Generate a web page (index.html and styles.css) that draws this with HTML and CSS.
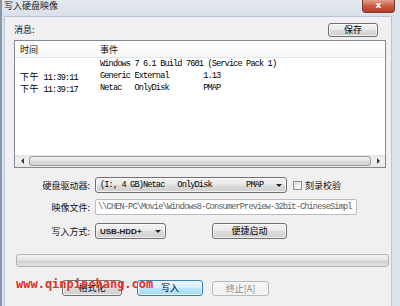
FILE: index.html
```html
<!DOCTYPE html>
<html>
<head>
    <meta charset="UTF-8">
    <title>写入硬盘映像</title>
    <link rel="stylesheet" href="styles.css">
</head>
<body>
    <div class="titlebar">
        <span class="title">写入硬盘映像</span>
        <div class="close-btn">x</div>
    </div>

    <div class="client">
        <div class="msg-head">
            <span class="label">消息:</span>
            <button class="btn save-btn">保存</button>
        </div>

        <div class="listbox">
            <div class="list-head">
                <span class="col-time">时间</span>
                <span class="col-event">事件</span>
            </div>
            <div class="list-rows">
                <div class="row">
                    <span class="col-time mono"></span>
                    <span class="col-event mono">Windows 7 6.1 Build 7601 (Service Pack 1)</span>
                </div>
                <div class="row">
                    <span class="col-time mono"><span class="cj">下午</span> 11:39:11</span>
                    <span class="col-event mono">Generic External        1.13</span>
                </div>
                <div class="row">
                    <span class="col-time mono"><span class="cj">下午</span> 11:39:17</span>
                    <span class="col-event mono">Netac   OnlyDisk        PMAP</span>
                </div>
            </div>
            <div class="hscroll">
                <div class="arrow arrow-left"></div>
                <div class="thumb"></div>
                <div class="arrow arrow-right"></div>
            </div>
        </div>

        <div class="form-row drive-row">
            <span class="form-label">硬盘驱动器:</span>
            <div class="combo drive-combo">
                <span class="mono">(I:, 4 GB)Netac   OnlyDisk        PMAP</span>
                <span class="caret"></span>
            </div>
            <span class="checkbox"></span>
            <span class="check-label">刻录校验</span>
        </div>

        <div class="form-row file-row">
            <span class="form-label">映像文件:</span>
            <div class="textbox mono">\\CHEN-PC\Movie\Windows8-ConsumerPreview-32bit-ChineseSimpl</div>
        </div>

        <div class="form-row mode-row">
            <span class="form-label">写入方式:</span>
            <div class="combo mode-combo">
                <span class="mode-text">USB-HDD+</span>
                <span class="caret"></span>
            </div>
            <button class="btn boot-btn">便捷启动</button>
        </div>

        <div class="progress"></div>

        <div class="actions">
            <button class="btn format-btn">格式化</button>
            <button class="btn default-btn write-btn">写入</button>
            <button class="btn disabled-btn stop-btn">终止[A]</button>
        </div>

        <div class="watermark">www.qinpinchang.com</div>
    </div>
</body>
</html>
```

FILE: styles.css
```css
body {
    margin: 0;
    width: 400px;
    height: 306px;
    overflow: hidden;
    background: #dbe3ec;
    border-left: 2px solid #8796a9;
    box-sizing: border-box;
    font-family: "Noto Sans CJK SC", sans-serif;
    font-size: 9px;
    color: #111;
}

.titlebar {
    height: 16px;
    display: flex;
    align-items: flex-start;
    justify-content: space-between;
    background: linear-gradient(#e4e8ee, #d9e1ea);
}

.title {
    margin-left: 2px;
    line-height: 12px;
    font-size: 9px;
    color: #222;
}

.close-btn {
    width: 31px;
    height: 12px;
    margin-right: 5px;
    border: 1px solid #7a3b33;
    border-top: none;
    border-radius: 0 0 4px 4px;
    background: linear-gradient(#e4a08f, #cc5a43 50%, #b83a22);
    color: #fff;
    font-family: "DejaVu Sans", sans-serif;
    font-weight: bold;
    font-size: 9px;
    line-height: 11px;
    text-align: center;
}

.client {
    position: relative;
    margin: 0 8px 0 2px;
    height: 290px;
    box-sizing: border-box;
    padding: 6px 5px 0 9px;
    background: #f0f0f0;
    border: 1px solid #b9c5d3;
    border-bottom: none;
}

.mono {
    font-family: "Liberation Mono", "Noto Sans CJK SC", monospace;
    font-size: 8.6px;
    letter-spacing: -0.86px;
    white-space: pre;
    color: #000;
}

.cj {
    font-family: "Noto Sans CJK SC", sans-serif;
    font-size: 9px;
    letter-spacing: 0.6px;
}

/* message header */
.msg-head {
    height: 14px;
    display: flex;
    align-items: center;
    justify-content: space-between;
}

.label {
    line-height: 12px;
}

.btn {
    box-sizing: border-box;
    padding: 0;
    border: 1px solid #707070;
    border-radius: 3px;
    background: linear-gradient(#f2f2f2, #ebebeb 45%, #dddddd 50%, #cfcfcf);
    box-shadow: inset 0 0 0 1px rgba(255, 255, 255, 0.7);
    font-family: "Noto Sans CJK SC", sans-serif;
    font-size: 9px;
    line-height: 12px;
    color: #000;
}

.save-btn {
    width: 50px;
    height: 14px;
    margin-right: 8px;
}

/* list view */
.listbox {
    margin-top: 3px;
    height: 128px;
    box-sizing: border-box;
    border: 1px solid #828790;
    background: #fff;
    display: flex;
    flex-direction: column;
}

.list-head {
    height: 16px;
    flex-shrink: 0;
    display: flex;
    align-items: center;
    border-bottom: 1px solid #e3e6ea;
    background: linear-gradient(#fff, #f7f8f9);
}

.col-time {
    width: 80px;
    padding-left: 5px;
    flex-shrink: 0;
}

.col-event {
    flex: 1;
}

.list-rows {
    flex: 1;
}

.row {
    height: 12px;
    display: flex;
    align-items: center;
    color: #1a1a1a;
}

.hscroll {
    height: 12px;
    flex-shrink: 0;
    display: flex;
    align-items: center;
    background: linear-gradient(#e4e4e4, #f1f1f1 40%, #e8e8e8);
}

.arrow {
    width: 14px;
    height: 12px;
    flex-shrink: 0;
    display: flex;
    align-items: center;
    justify-content: center;
}

.arrow::after {
    content: "";
    border: 3px solid transparent;
}

.arrow-left::after {
    border-right-color: #3a3a3a;
    margin-right: 3px;
}

.arrow-right::after {
    border-left-color: #3a3a3a;
    margin-left: 3px;
}

.thumb {
    flex: 1;
    height: 10px;
    box-sizing: border-box;
    border: 1px solid #9a9a9a;
    border-radius: 3px;
    background: linear-gradient(#f4f4f4, #e4e4e4 50%, #d4d4d4 51%, #dadada);
}

/* form */
.form-row {
    display: flex;
    align-items: center;
    height: 16px;
}

.drive-row {
    margin-top: 9px;
}

.file-row {
    margin-top: 6px;
}

.mode-row {
    margin-top: 8px;
}

.form-label {
    width: 76px;
    margin-right: 5px;
    text-align: right;
    flex-shrink: 0;
}

.combo {
    height: 16px;
    box-sizing: border-box;
    border: 1px solid #707070;
    border-radius: 3px;
    background: linear-gradient(#f2f2f2, #ebebeb 45%, #dddddd 50%, #cfcfcf);
    box-shadow: inset 0 0 0 1px rgba(255, 255, 255, 0.7);
    display: flex;
    align-items: center;
    justify-content: space-between;
    padding: 0 4px 0 4px;
}

.caret {
    border: 3px solid transparent;
    border-top: 3px solid #222;
    border-bottom: none;
    margin-top: 1px;
}

.drive-combo {
    width: 192px;
}

.mode-combo {
    width: 71px;
}

.mode-text {
    font-family: "Liberation Sans", sans-serif;
    font-size: 8px;
    font-weight: bold;
    color: #222;
}

.checkbox {
    width: 9px;
    height: 9px;
    box-sizing: border-box;
    margin-left: 6px;
    border: 1px solid #8e8f8f;
    background: linear-gradient(135deg, #dcdcdc, #fdfdfd);
}

.check-label {
    margin-left: 3px;
}

.textbox {
    width: 262px;
    height: 16px;
    box-sizing: border-box;
    border: 1px solid #b8bcc2;
    border-radius: 2px;
    background: #fff;
    color: #5a5a5a;
    padding-left: 2px;
    line-height: 14px;
    overflow: hidden;
}

.boot-btn {
    width: 75px;
    height: 16px;
    margin-left: 46px;
}

/* progress + actions */
.progress {
    margin: 15px -3px 0 2px;
    height: 13px;
    box-sizing: border-box;
    border: 1px solid #b2b2b2;
    border-radius: 3px;
    background: linear-gradient(#f3f3f3, #e6e6e6 45%, #d2d2d2 55%, #e2e2e2);
}

.actions {
    margin-top: 13px;
    display: flex;
}

.format-btn {
    width: 60px;
    height: 16px;
    margin-left: 48px;
}

.default-btn {
    border-color: #3c7fb1;
    background: linear-gradient(#eaf6fd, #d9f0fc 50%, #bee6fd 50%, #a7d9f5);
}

.write-btn {
    width: 66px;
    height: 16px;
    margin-left: 15px;
}

.disabled-btn {
    border-color: #b5b9bd;
    background: #f4f4f4;
    color: #8a8a8a;
    box-shadow: none;
}

.stop-btn {
    width: 57px;
    height: 15px;
    margin-left: 9px;
    margin-top: 1px;
}

.watermark {
    position: absolute;
    left: 11px;
    top: 261px;
    font-family: "DejaVu Sans Mono", monospace;
    font-weight: bold;
    font-size: 12px;
    line-height: 12px;
    color: #e2322c;
    white-space: pre;
}
```
